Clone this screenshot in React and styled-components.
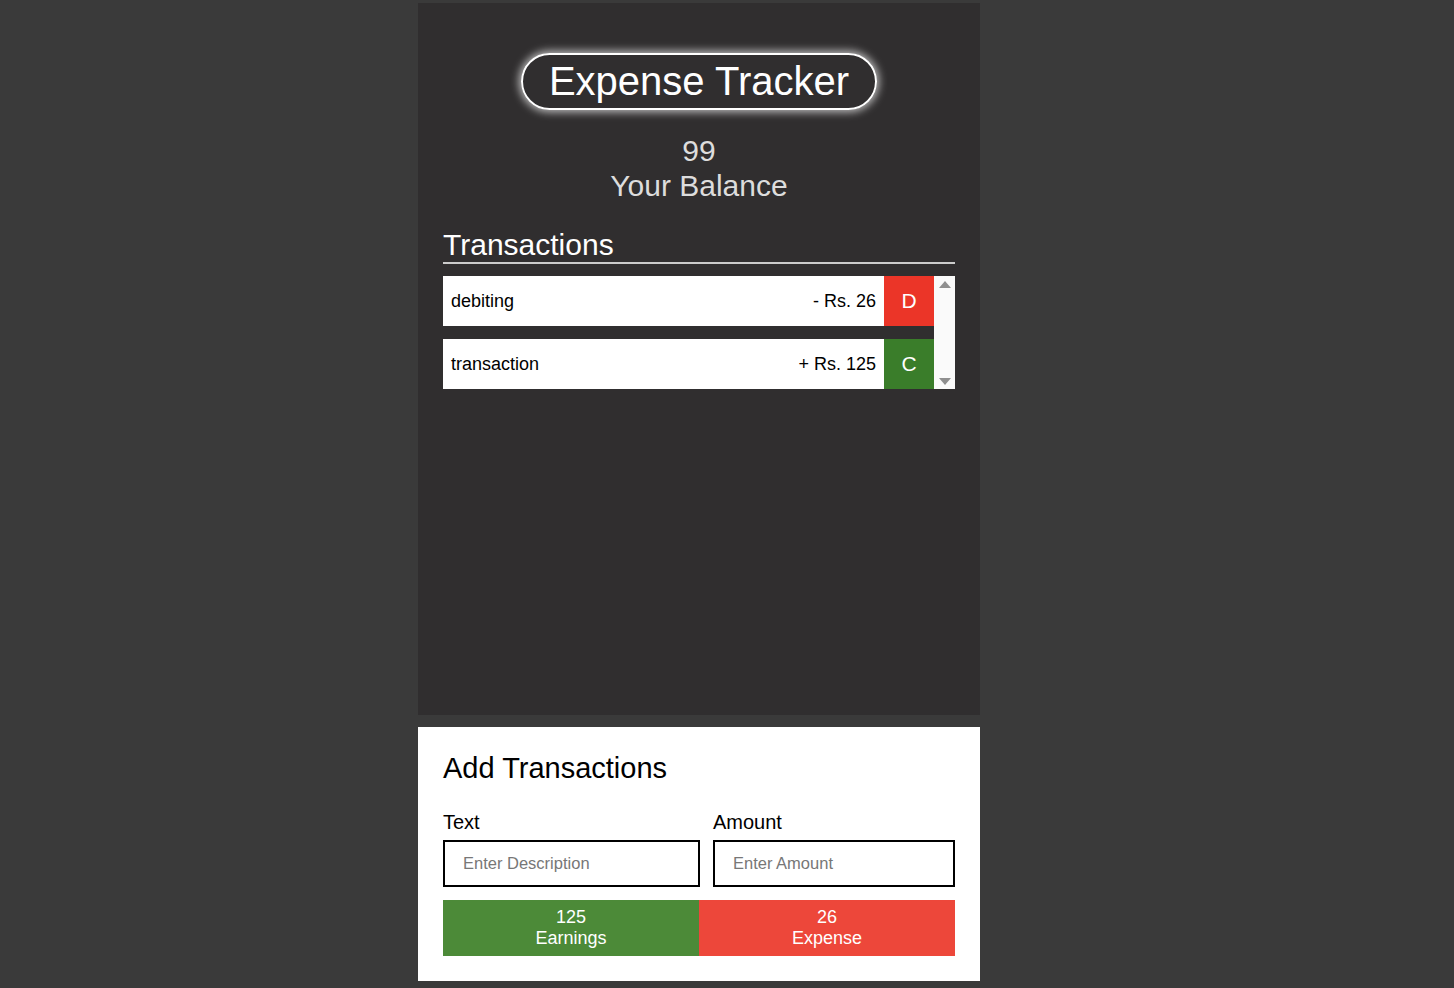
import React from "react";
import styled, { createGlobalStyle } from "styled-components";

const GlobalStyle = createGlobalStyle`
  html, body {
    margin: 0;
    padding: 0;
    background: #3a3a3a;
    font-family: "Liberation Sans", Arial, sans-serif;
  }
  * { box-sizing: border-box; }
`;

const Page = styled.div`
  width: 562px;
  margin-left: 418px;
  padding-top: 3px;
  display: flex;
  flex-direction: column;
  gap: 12px;
`;

const Panel = styled.div`
  background: #302e2f;
  height: 712px;
  padding: 50px 25px 25px;
  display: flex;
  flex-direction: column;
`;

const TitleRow = styled.div`
  display: flex;
  justify-content: center;
`;

const Title = styled.h1`
  margin: 0;
  height: 57px;
  padding: 0 26px;
  display: flex;
  align-items: center;
  font-size: 40px;
  font-weight: 400;
  color: #ffffff;
  border: 2px solid #ffffff;
  border-radius: 29px;
  box-shadow: 0 0 8px 2px rgba(255, 255, 255, 0.7);
`;

const Balance = styled.div`
  margin-top: 23px;
  text-align: center;
  color: #dddddd;
  font-size: 30px;
  line-height: 35px;
`;

const SectionTitle = styled.h2`
  margin: 24px 0 0;
  font-size: 30px;
  font-weight: 400;
  color: #ffffff;
  line-height: 35px;
  border-bottom: 2px solid #cccccc;
`;

const List = styled.div`
  margin-top: 12px;
  height: 113px;
  display: flex;
`;

const Items = styled.div`
  flex: 1;
  display: flex;
  flex-direction: column;
  gap: 13px;
`;

const ScrollTrack = styled.div`
  width: 21px;
  background: #fafafa;
  display: flex;
  flex-direction: column;
  justify-content: space-between;
  align-items: center;
  padding: 5px 0 4px;
`;

const Arrow = styled.span`
  width: 0;
  height: 0;
  border-left: 6px solid transparent;
  border-right: 6px solid transparent;
  ${(p) =>
    p.down
      ? "border-top: 7px solid #8f8f8f;"
      : "border-bottom: 7px solid #8f8f8f;"}
`;

const Item = styled.div`
  flex: 0 0 50px;
  display: flex;
  align-items: center;
  background: #ffffff;
  color: #000000;
  font-size: 18px;
`;

const ItemText = styled.span`
  flex: 1;
  padding-left: 8px;
`;

const ItemAmount = styled.span`
  padding-right: 8px;
`;

const Badge = styled.span`
  width: 50px;
  height: 50px;
  display: flex;
  align-items: center;
  justify-content: center;
  color: #ffffff;
  font-size: 21px;
  background: ${(p) => (p.credit ? "#3a7d2a" : "#eb3528")};
`;

const AddPanel = styled.div`
  background: #ffffff;
  height: 254px;
  padding: 24px 25px 25px;
`;

const AddTitle = styled.h2`
  margin: 0;
  font-size: 29px;
  font-weight: 400;
  color: #000000;
  line-height: 34px;
`;

const Form = styled.div`
  margin-top: 26px;
  display: flex;
  gap: 13px;
`;

const Field = styled.label`
  display: flex;
  flex-direction: column;
  width: ${(p) => p.w}px;
  font-size: 20px;
  color: #000000;
  line-height: 23px;
`;

const Input = styled.input`
  margin-top: 6px;
  height: 47px;
  border: 2px solid #000000;
  padding: 0 18px;
  font-size: 16.5px;
  font-family: "Liberation Sans", Arial, sans-serif;
  outline: none;
  &::placeholder {
    color: #777777;
  }
`;

const Totals = styled.div`
  margin-top: 13px;
  display: grid;
  grid-template-columns: 1fr 1fr;
`;

const Total = styled.div`
  height: 56px;
  display: flex;
  flex-direction: column;
  align-items: center;
  justify-content: center;
  color: #ffffff;
  font-size: 18px;
  line-height: 21px;
  background: ${(p) => (p.earn ? "#4c8a38" : "#ed473a")};
`;

const transactions = [
  { id: 1, text: "debiting", amount: -26 },
  { id: 2, text: "transaction", amount: 125 },
];

export default function App() {
  const earnings = transactions.filter((t) => t.amount > 0).reduce((a, t) => a + t.amount, 0);
  const expense = transactions.filter((t) => t.amount < 0).reduce((a, t) => a - t.amount, 0);

  return (
    <>
      <GlobalStyle />
      <Page>
        <Panel>
          <TitleRow>
            <Title>Expense Tracker</Title>
          </TitleRow>
          <Balance>
            <div>{earnings - expense}</div>
            <div>Your Balance</div>
          </Balance>
          <SectionTitle>Transactions</SectionTitle>
          <List>
            <Items>
              {transactions.map((t) => (
                <Item key={t.id}>
                  <ItemText>{t.text}</ItemText>
                  <ItemAmount>
                    {t.amount < 0 ? "-" : "+"} Rs. {Math.abs(t.amount)}
                  </ItemAmount>
                  <Badge credit={t.amount > 0}>{t.amount > 0 ? "C" : "D"}</Badge>
                </Item>
              ))}
            </Items>
            <ScrollTrack>
              <Arrow />
              <Arrow down />
            </ScrollTrack>
          </List>
        </Panel>
        <AddPanel>
          <AddTitle>Add Transactions</AddTitle>
          <Form>
            <Field w={257}>
              Text
              <Input placeholder="Enter Description" />
            </Field>
            <Field w={242}>
              Amount
              <Input placeholder="Enter Amount" />
            </Field>
          </Form>
          <Totals>
            <Total earn>
              <span>{earnings}</span>
              <span>Earnings</span>
            </Total>
            <Total>
              <span>{expense}</span>
              <span>Expense</span>
            </Total>
          </Totals>
        </AddPanel>
      </Page>
    </>
  );
}
